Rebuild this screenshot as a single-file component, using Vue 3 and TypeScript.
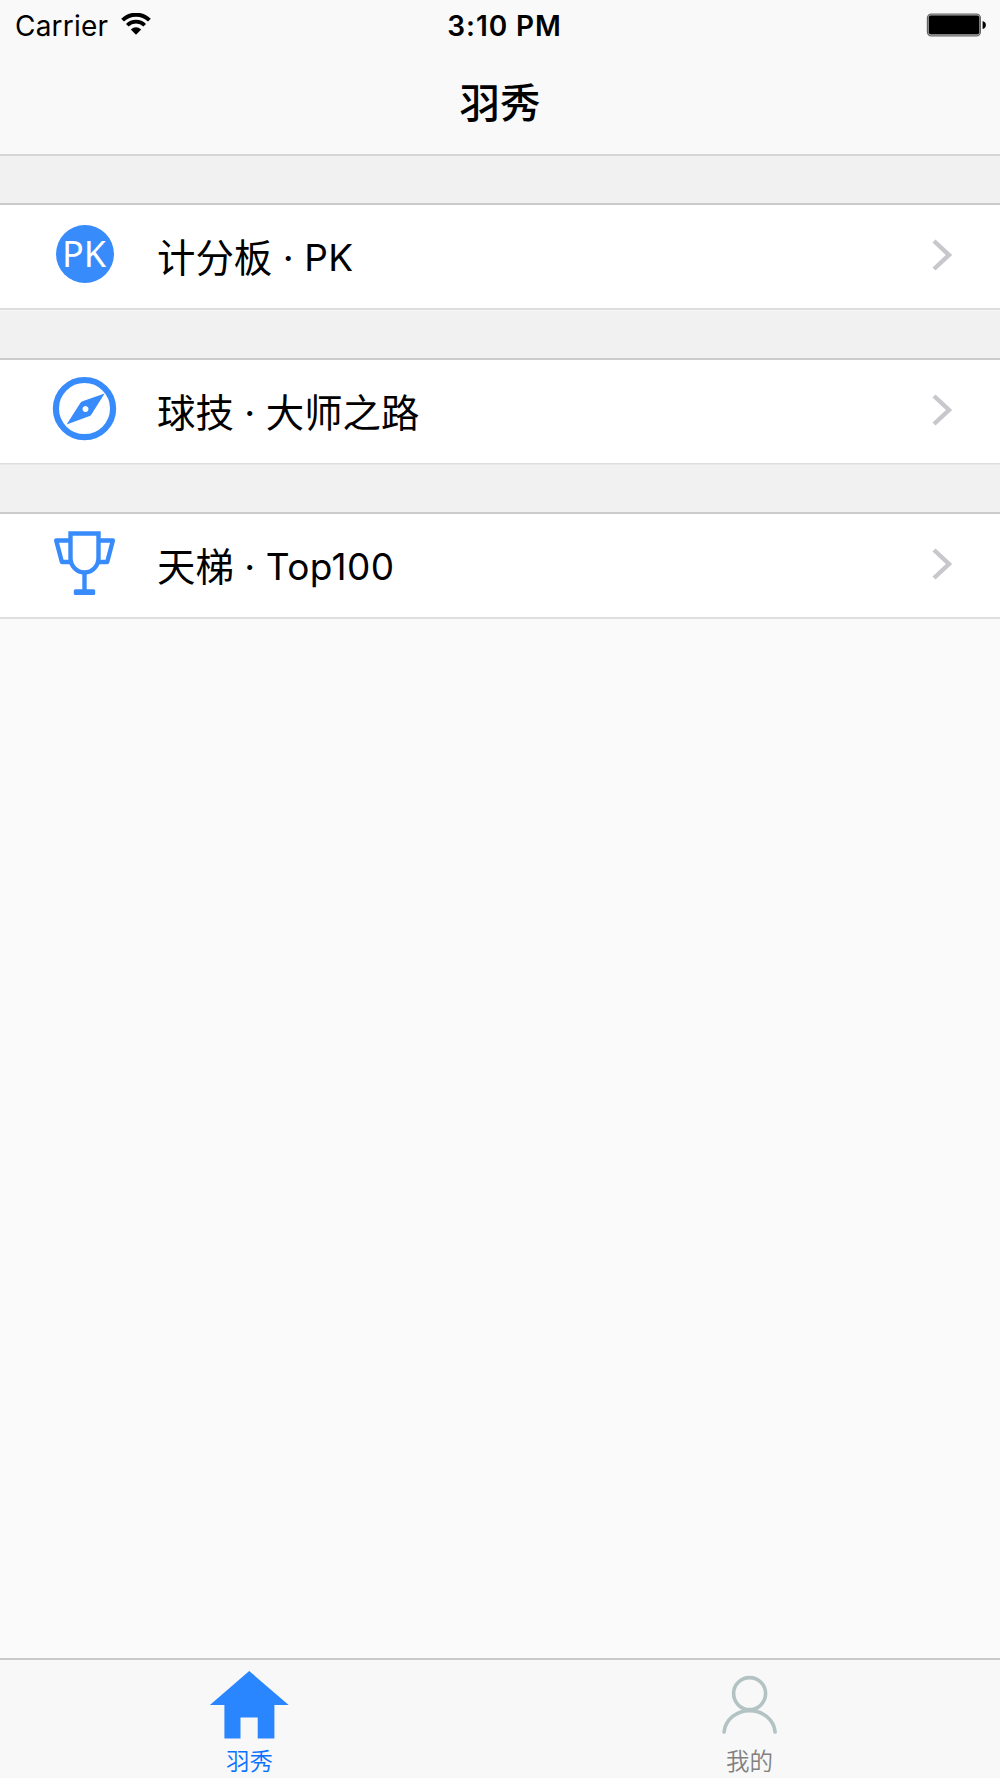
<template>
  <div class="screen">
    <header class="header">
      <div class="status-bar">
        <div class="carrier">
          <span>Carrier</span>
          <svg class="wifi" width="30" height="22" viewBox="0 0 30 22">
            <path d="M1.6 7.2A19 19 0 0 1 28.4 7.2" fill="none" stroke="#000" stroke-width="4" />
            <path d="M6.3 12.2A12.2 12.2 0 0 1 23.7 12.2" fill="none" stroke="#000" stroke-width="3.7" />
            <path d="M15 21.8L9.8 16.6Q15 11.8 20.2 16.6Z" />
          </svg>
        </div>
        <span class="time">3:10 PM</span>
        <svg class="battery" width="60" height="24" viewBox="0 0 60 24">
          <rect x="1.4" y="1" width="53" height="22" rx="4" fill="#aaa" stroke="#666" stroke-width="1.2" />
          <rect x="2.8" y="2.4" width="50.4" height="18.8" rx="2" />
          <path d="M56.6 8Q59.9 9 59.9 12T56.6 16Z" />
        </svg>
      </div>
      <h1 class="title">羽秀</h1>
    </header>

    <main class="list">
      <div v-for="item in items" :key="item.icon" class="row">
        <div class="row-icon">
          <svg v-if="item.icon === 'pk'" width="66" height="66" viewBox="0 0 66 66">
            <circle cx="33" cy="33" r="29" fill="#388bfb" />
            <text class="pk-text" x="10" y="46" textLength="44" lengthAdjust="spacingAndGlyphs">PK</text>
          </svg>
          <svg v-else-if="item.icon === 'compass'" width="66" height="66" viewBox="0 0 66 66">
            <circle cx="32.5" cy="32.6" r="28.6" fill="none" stroke="#388bfb" stroke-width="6.2" />
            <path
              d="M52.6 17.6L39.7 38.1Q39 39.4 37.7 40.1L14.6 48.6L28.3 27.1Q29 25.9 30.5 25.3ZM33.5 30.1a3 3 0 1 0 .01 0Z"
              fill="#388bfb"
              fill-rule="evenodd"
            />
          </svg>
          <svg v-else width="66" height="66" viewBox="0 0 66 66" fill="none" stroke="#388bfb" stroke-width="4.4">
            <path d="M18.5 3.5H46.5V28A14 14.5 0 0 1 18.5 28Z" />
            <path d="M18 10.5H4.2L9.9 32H19M47 10.5H60.9L55.2 32H46" stroke-linejoin="round" />
            <path d="M32.5 42V60" />
            <rect x="23" y="60.4" width="19" height="3.4" rx="0.4" stroke-width="2.4" fill="#388bfb" />
          </svg>
        </div>
        <div class="label">
          <span class="cjk">{{ item.prefix }}</span><span class="dot">·</span><span :class="item.latin ? 'latin' : 'cjk'">{{ item.suffix }}</span>
        </div>
        <svg class="chevron" width="20" height="32" viewBox="0 0 20 32">
          <path d="M2 2L17 16L2 30" fill="none" stroke="#c7c7cc" stroke-width="4.4" />
        </svg>
      </div>
    </main>

    <nav class="tab-bar">
      <div
        v-for="tab in tabs"
        :key="tab.name"
        class="tab"
        :class="{ active: tab.name === currentTab }"
        @click="currentTab = tab.name"
      >
        <svg v-if="tab.name === 'home'" width="80" height="68" viewBox="0 0 80 68">
          <path d="M39.2 0L78.7 34H64.4V67.5H47.7V46.5H30.5V67.5H14.4V34H-0.1Z" fill="#2a86ff" />
        </svg>
        <svg v-else width="80" height="68" viewBox="0 0 80 68" fill="none" stroke="#b3c3c3" stroke-width="3.6">
          <circle cx="39.6" cy="22.6" r="16" />
          <path d="M14.1 61A25.6 23.5 0 0 1 65.1 61" stroke-linecap="round" />
        </svg>
        <span class="tab-label">{{ tab.label }}</span>
      </div>
    </nav>
  </div>
</template>

<script setup lang="ts">
import { ref } from 'vue';

interface Item {
  icon: string;
  prefix: string;
  suffix: string;
  latin: boolean;
}

const items: Item[] = [
  { icon: 'pk', prefix: '计分板', suffix: 'PK', latin: true },
  { icon: 'compass', prefix: '球技', suffix: '大师之路', latin: false },
  { icon: 'trophy', prefix: '天梯', suffix: 'Top100', latin: true },
];

const tabs = [
  { name: 'home', label: '羽秀' },
  { name: 'mine', label: '我的' },
];

const currentTab = ref('home');
</script>

<style>
body {
  margin: 0;
}
</style>

<style scoped>
.screen {
  display: flex;
  flex-direction: column;
  width: 1000px;
  height: 1778px;
  overflow: hidden;
  background: #fafafa;
  color: #000;
  font-family: Inter, "Noto Sans CJK SC", sans-serif;
}

.header {
  box-sizing: border-box;
  height: 156px;
  background: #f9f9f9;
  border-bottom: 2px solid #d6d6d7;
}

.status-bar {
  display: grid;
  grid-template-columns: 1fr auto 1fr;
  align-items: center;
  height: 51px;
  padding: 0 14px 0 15px;
  font-size: 28px;
}

.carrier {
  display: flex;
  align-items: center;
  gap: 13px;
  letter-spacing: 0.2px;
}

.wifi {
  margin-top: -3px;
}

.time {
  font-weight: 600;
  letter-spacing: 0.9px;
  margin-left: 8px;
}

.battery {
  justify-self: end;
  margin-top: -2px;
}

.title {
  margin: 24px 0 0;
  font-size: 40.5px;
  line-height: 58px;
  font-weight: 500;
  text-align: center;
}

.list {
  flex: 1;
}

.row {
  box-sizing: border-box;
  display: flex;
  align-items: center;
  height: 107px;
  margin-top: 47.5px;
  padding: 0 48px 0 52px;
  background: #fff;
  border-top: 2px solid #cbcbcd;
  border-bottom: 2px solid #dededf;
  box-shadow: 0 -47.5px 0 #f1f1f1; /* Bandeau gris au-dessus de la ligne */
}

.row:first-child {
  margin-top: 47px;
  box-shadow: 0 -47px 0 #f1f1f1;
}

.row-icon {
  width: 66px;
  height: 66px;
  margin: -5px 39px 0 0;
}

.row-icon svg {
  display: block;
}

.pk-text {
  font-family: "Noto Sans", sans-serif;
  font-size: 37px;
  fill: #fff;
}

.label {
  flex: 1;
  line-height: 56px;
  margin-top: 8px;
}

.cjk {
  font-family: "Noto Sans CJK SC", sans-serif;
  font-size: 38.4px;
}

.dot {
  display: inline-block;
  width: 32px;
  font-size: 38px;
  text-align: center;
}

.latin {
  font-size: 37px;
  letter-spacing: 0.4px;
  vertical-align: 1px;
}

.chevron {
  margin-top: -3px;
}

.tab-bar {
  box-sizing: border-box;
  display: flex;
  height: 120px;
  background: #f8f8f8;
  border-top: 2px solid #c9c9ca;
}

.tab {
  display: flex;
  flex-direction: column;
  align-items: center;
  flex: 1;
  padding-top: 11px;
  color: #808080;
  cursor: pointer;
}

.tab svg {
  overflow: visible;
}

.tab.active {
  color: #0a72ff;
}

.tab-label {
  font-size: 23.5px;
  font-weight: 350;
  line-height: 34px;
  margin: 6px 1px 0 0;
}
</style>
